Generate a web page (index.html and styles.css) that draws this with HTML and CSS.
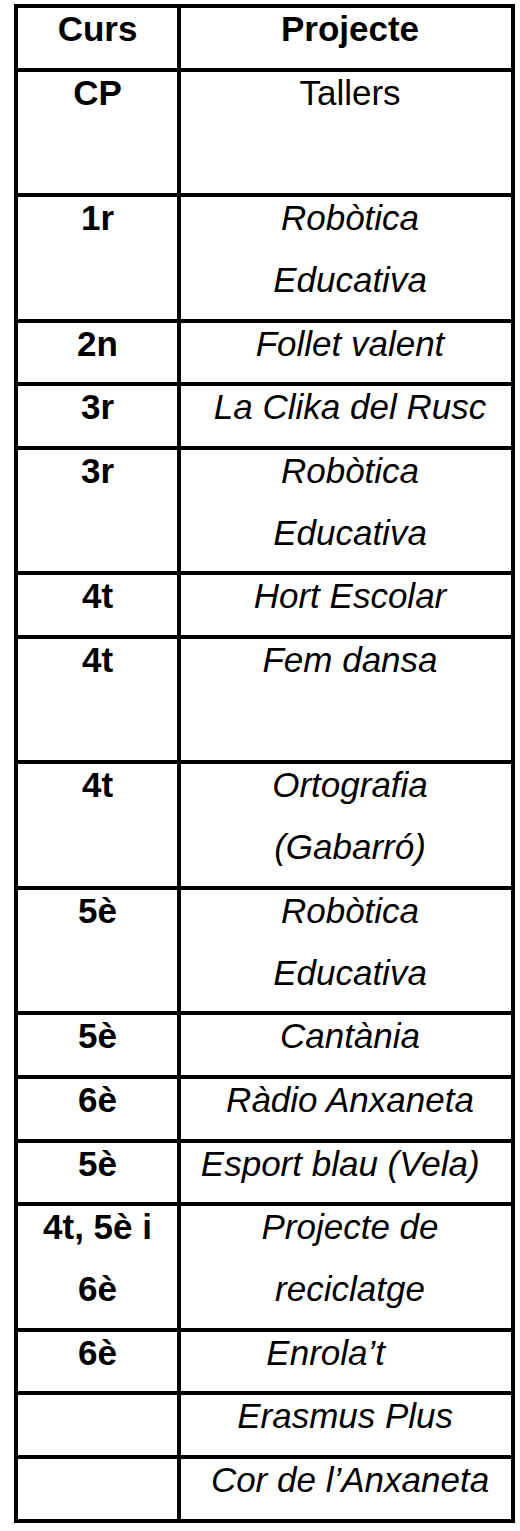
FILE: index.html
```html
<!DOCTYPE html>
<html lang="ca">
<head>
<meta charset="utf-8">
<title>Projectes</title>
<link rel="stylesheet" href="styles.css">
</head>
<body>
<table class="projects">
  <thead>
    <tr>
      <th class="course"><div class="txt">Curs</div></th>
      <th class="project"><div class="txt">Projecte</div></th>
    </tr>
  </thead>
  <tbody>
    <tr>
      <td class="course"><div class="txt">CP</div></td>
      <td class="project plain"><div class="txt">Tallers<br>&nbsp;</div></td>
    </tr>
    <tr>
      <td class="course"><div class="txt">1r</div></td>
      <td class="project"><div class="txt">Robòtica<br>Educativa</div></td>
    </tr>
    <tr>
      <td class="course"><div class="txt">2n</div></td>
      <td class="project"><div class="txt">Follet valent</div></td>
    </tr>
    <tr>
      <td class="course"><div class="txt">3r</div></td>
      <td class="project"><div class="txt">La Clika del Rusc</div></td>
    </tr>
    <tr>
      <td class="course"><div class="txt">3r</div></td>
      <td class="project"><div class="txt">Robòtica<br>Educativa</div></td>
    </tr>
    <tr>
      <td class="course"><div class="txt">4t</div></td>
      <td class="project"><div class="txt">Hort Escolar</div></td>
    </tr>
    <tr>
      <td class="course"><div class="txt">4t</div></td>
      <td class="project"><div class="txt">Fem dansa<br>&nbsp;</div></td>
    </tr>
    <tr>
      <td class="course"><div class="txt">4t</div></td>
      <td class="project"><div class="txt">Ortografia<br>(Gabarró)</div></td>
    </tr>
    <tr>
      <td class="course"><div class="txt">5è</div></td>
      <td class="project"><div class="txt">Robòtica<br>Educativa</div></td>
    </tr>
    <tr>
      <td class="course"><div class="txt">5è</div></td>
      <td class="project"><div class="txt">Cantània</div></td>
    </tr>
    <tr>
      <td class="course"><div class="txt">6è</div></td>
      <td class="project"><div class="txt">Ràdio Anxaneta</div></td>
    </tr>
    <tr>
      <td class="course"><div class="txt">5è</div></td>
      <td class="project"><div class="txt">Esport blau (Vela)&nbsp;&nbsp;</div></td>
    </tr>
    <tr>
      <td class="course"><div class="txt">4t, 5è i<br>6è</div></td>
      <td class="project"><div class="txt">Projecte de<br>reciclatge</div></td>
    </tr>
    <tr>
      <td class="course"><div class="txt">6è</div></td>
      <td class="project"><div class="txt">Enrola’t&nbsp;&nbsp;&nbsp;&nbsp;&nbsp;</div></td>
    </tr>
    <tr>
      <td class="course"><div class="txt"></div></td>
      <td class="project"><div class="txt">Erasmus Plus&nbsp;</div></td>
    </tr>
    <tr>
      <td class="course"><div class="txt"></div></td>
      <td class="project"><div class="txt">Cor de l’Anxaneta</div></td>
    </tr>
  </tbody>
</table>
</body>
</html>
```

FILE: styles.css
```css
html, body {
  margin: 0;
  padding: 0;
  background: #ffffff;
}

body {
  font-family: "Liberation Sans", Arial, sans-serif;
  color: #000000;
}

.projects {
  margin: 4px 0 0 14px;
  border-collapse: separate;
  border-spacing: 0;
  border-top: 4px solid #000;
  border-left: 4px solid #000;
  table-layout: fixed;
}

.projects th,
.projects td {
  padding: 0;
  border-right: 4px solid #000;
  border-bottom: 4px solid #000;
  vertical-align: top;
  text-align: center;
  font-size: 35px;
}

.projects .course {
  width: 159px;
  font-weight: bold;
}

.projects .project {
  width: 322px;
  padding-left: 8px;
  font-style: italic;
  font-weight: normal;
}

.projects th.project {
  font-style: normal;
  font-weight: bold;
}

.projects td.plain {
  font-style: normal;
}

.txt {
  line-height: 61.7px;
  min-height: 61.7px;
  margin: -10px 0 8px 0;
  white-space: nowrap;
}
```
